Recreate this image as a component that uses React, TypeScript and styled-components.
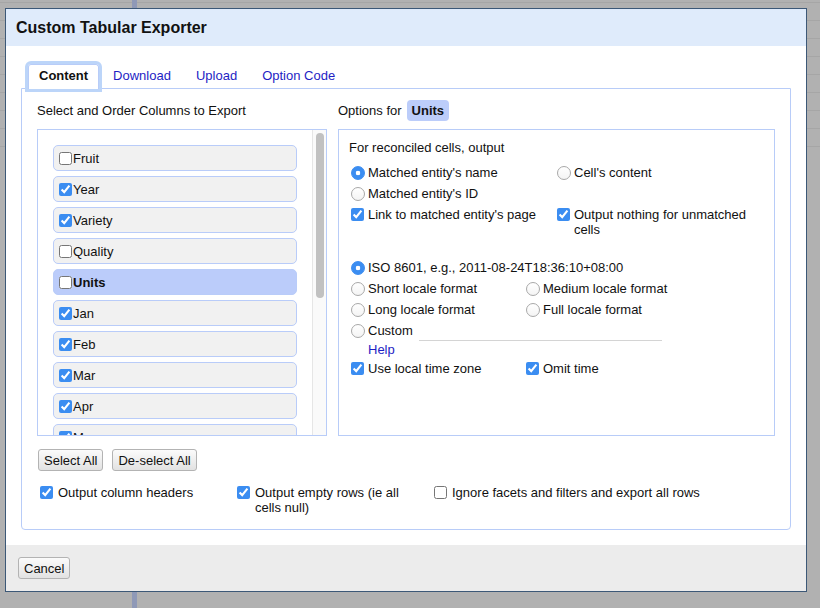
import React from "react";
import styled, { createGlobalStyle } from "styled-components";

const GlobalStyle = createGlobalStyle`
  html, body {
    margin: 0;
    padding: 0;
  }
  body {
    font-family: "Liberation Sans", Arial, Helvetica, sans-serif;
    font-size: 13px;
    color: #111;
    background-color: #b1b1b1;
    background-image:
      linear-gradient(to right, transparent 132px, #8f99b7 132px, #8f99b7 137px, transparent 137px),
      repeating-linear-gradient(to bottom, #a6a6a6 0 1px, transparent 1px 18px);
    background-size: 100% 100%, 100% 150px;
    background-repeat: no-repeat;
    background-position: 0 0, 0 2px;
  }
`;

const Backdrop = styled.div`
  min-height: 100vh;
  box-sizing: border-box;
  padding: 8px 0 0 5px;
`;

const Dialog = styled.div`
  width: 802px;
  box-sizing: border-box;
  border: 1px solid #3c5877;
  background: #fff;
  display: flex;
  flex-direction: column;
`;

const Header = styled.div`
  height: 37px;
  display: flex;
  align-items: center;
  padding: 0 10px;
  background: #dfebfb;
  font-size: 16px;
  font-weight: bold;
  color: #111;
`;

const Body = styled.div`
  padding: 18px 15px 15px;
`;

const TabBar = styled.div`
  display: flex;
  padding-left: 7px;
  position: relative;
  z-index: 1;
`;

const Tab = styled.div<{ $active?: boolean }>`
  height: 25px;
  box-sizing: border-box;
  padding: 3px 10px 0;
  margin: 0 3px -1px 0;
  line-height: 15px;
  border: 1px solid ${p => (p.$active ? "#b8ccf8" : "transparent")};
  border-bottom: none;
  border-radius: 3px 3px 0 0;
  background: ${p => (p.$active ? "#fff" : "transparent")};
  color: ${p => (p.$active ? "#111" : "#1e1ec4")};
  font-weight: ${p => (p.$active ? "bold" : "normal")};
  outline: ${p => (p.$active ? "3px solid #bcd5f9" : "none")};
  outline-offset: 0;
  cursor: pointer;
`;

const Panel = styled.div`
  border: 1px solid #b8ccf8;
  border-radius: 0 0 4px 4px;
  padding: 11px 15px 14px;
  background: #fff;
`;

const Columns = styled.div`
  display: grid;
  grid-template-columns: 290px 1fr;
  column-gap: 11px;
`;

const Heading = styled.div`
  height: 21px;
  display: flex;
  align-items: center;
  gap: 5px;
  margin-bottom: 8px;
`;

const Badge = styled.span`
  background: #bccdfa;
  border-radius: 4px;
  padding: 0 5px;
  line-height: 21px;
  font-weight: bold;
`;

const ListBox = styled.div`
  height: 307px;
  box-sizing: border-box;
  border: 1px solid #b8ccf8;
  display: flex;
`;

const ListItems = styled.div`
  flex: 1;
  overflow: hidden;
  padding: 15px;
  display: flex;
  flex-direction: column;
  gap: 5px;
`;

const ScrollTrack = styled.div`
  width: 14px;
  flex-shrink: 0;
  box-sizing: border-box;
  padding: 3px 2px 0 3px;
  background: #fafafa;
  border-left: 1px solid #e6e6e6;
`;

const ScrollThumb = styled.div`
  height: 165px;
  border-radius: 4px;
  background: #c1c1c1;
`;

const ColumnItem = styled.label<{ $selected?: boolean }>`
  height: 26px;
  flex-shrink: 0;
  box-sizing: border-box;
  display: flex;
  align-items: center;
  padding: 0 5px;
  border: 1px solid #b9ccf9;
  border-radius: 5px;
  background: ${p => (p.$selected ? "#bbccfa" : "#f1f1f1")};
  font-weight: ${p => (p.$selected ? "bold" : "normal")};
`;

const Check = styled.input.attrs({ type: "checkbox" })<{ $ml?: number; $mr?: number }>`
  width: 13px;
  height: 13px;
  flex-shrink: 0;
  margin: ${p => `1px ${p.$mr ?? 4}px 0 ${p.$ml ?? 2}px`};
  accent-color: #3b8df1;
`;

const ListCheck = styled.input.attrs({ type: "checkbox" })`
  width: 13px;
  height: 13px;
  flex-shrink: 0;
  margin: 0 1px 0 0;
  accent-color: #3b8df1;
`;

const Radio = styled.input.attrs({ type: "radio" })`
  appearance: none;
  width: 14px;
  height: 14px;
  flex-shrink: 0;
  box-sizing: border-box;
  margin: 1px 3px 0 2px;
  border: 1px solid #a8a8a8;
  border-radius: 50%;
  background: linear-gradient(#fff, #f4f4f4);

  &:checked {
    border-color: #3b8df1;
    background: radial-gradient(circle, #fff 0 2px, #3b8df1 2.6px);
  }
`;

const ButtonRow = styled.div`
  display: flex;
  gap: 9px;
  margin-top: 13px;
  padding-left: 1px;
`;

const Button = styled.button`
  height: 22px;
  padding: 0 5px;
  font: inherit;
  color: #111;
  border: 1px solid #b3b3b3;
  border-radius: 3px;
  background: linear-gradient(#fbfbfb, #e2e2e2);
`;

const OptionsBox = styled.div`
  height: 307px;
  box-sizing: border-box;
  border: 1px solid #b8ccf8;
  padding: 10px;
`;

const SubHeading = styled.div`
  line-height: 15px;
  margin-bottom: 7px;
`;

const OptionGrid = styled.div<{ $first: number; $gapTop?: number }>`
  display: grid;
  grid-template-columns: ${p => p.$first}px 1fr;
  margin-top: ${p => p.$gapTop ?? 0}px;
`;

const OptionCell = styled.label<{ $span?: boolean; $tight?: boolean }>`
  display: flex;
  align-items: flex-start;
  padding: ${p => (p.$tight ? "3px 0 0" : "3px 0")};
  line-height: 15px;
  grid-column: ${p => (p.$span ? "1 / -1" : "auto")};
`;

const CustomInput = styled.input`
  width: 243px;
  height: 18px;
  box-sizing: border-box;
  margin: 0 0 0 6px;
  border: none;
  border-bottom: 1px solid #d4d4d4;
  outline: none;
  font: inherit;
`;

const HelpLink = styled.a`
  grid-column: 1 / -1;
  padding: 1px 0 1px 19px;
  line-height: 15px;
  color: #1e1ec4;
  text-decoration: none;
`;

const BottomGrid = styled.div`
  display: grid;
  grid-template-columns: 197px 197px 1fr;
  margin-top: 14px;
`;

const BottomCell = styled.label`
  display: flex;
  align-items: flex-start;
  line-height: 15px;
`;

const BottomText = styled.span<{ $max?: number }>`
  max-width: ${p => (p.$max ? `${p.$max}px` : "none")};
`;

const Footer = styled.div`
  height: 46px;
  box-sizing: border-box;
  padding: 12px;
  background: #ececec;
`;

const columns: { name: string; checked: boolean }[] = [
  { name: "Fruit", checked: false },
  { name: "Year", checked: true },
  { name: "Variety", checked: true },
  { name: "Quality", checked: false },
  { name: "Units", checked: false },
  ...["Jan", "Feb", "Mar", "Apr", "May", "Jun", "Jul", "Aug", "Sep", "Oct", "Nov", "Dec"].map(m => ({
    name: m,
    checked: true,
  })),
];

export default function App() {
  return (
    <>
      <GlobalStyle />
      <Backdrop>
        <Dialog>
          <Header>Custom Tabular Exporter</Header>
          <Body>
            <TabBar>
              <Tab $active>Content</Tab>
              <Tab>Download</Tab>
              <Tab>Upload</Tab>
              <Tab>Option Code</Tab>
            </TabBar>
            <Panel>
              <Columns>
                <div>
                  <Heading>Select and Order Columns to Export</Heading>
                  <ListBox>
                    <ListItems>
                      {columns.map(c => (
                        <ColumnItem key={c.name} $selected={c.name === "Units"}>
                          <ListCheck defaultChecked={c.checked} />
                          {c.name}
                        </ColumnItem>
                      ))}
                    </ListItems>
                    <ScrollTrack>
                      <ScrollThumb />
                    </ScrollTrack>
                  </ListBox>
                  <ButtonRow>
                    <Button>Select All</Button>
                    <Button>De-select All</Button>
                  </ButtonRow>
                </div>
                <div>
                  <Heading>
                    Options for <Badge>Units</Badge>
                  </Heading>
                  <OptionsBox>
                    <SubHeading>For reconciled cells, output</SubHeading>
                    <OptionGrid $first={206}>
                      <OptionCell>
                        <Radio name="recon" defaultChecked />
                        Matched entity's name
                      </OptionCell>
                      <OptionCell>
                        <Radio name="recon" />
                        Cell's content
                      </OptionCell>
                      <OptionCell $span>
                        <Radio name="recon" />
                        Matched entity's ID
                      </OptionCell>
                      <OptionCell>
                        <Check defaultChecked />
                        Link to matched entity's page
                      </OptionCell>
                      <OptionCell>
                        <Check defaultChecked />
                        Output nothing for unmatched cells
                      </OptionCell>
                    </OptionGrid>
                    <OptionGrid $first={175} $gapTop={17}>
                      <OptionCell $span>
                        <Radio name="date" defaultChecked />
                        ISO 8601, e.g., 2011-08-24T18:36:10+08:00
                      </OptionCell>
                      <OptionCell>
                        <Radio name="date" />
                        Short locale format
                      </OptionCell>
                      <OptionCell>
                        <Radio name="date" />
                        Medium locale format
                      </OptionCell>
                      <OptionCell>
                        <Radio name="date" />
                        Long locale format
                      </OptionCell>
                      <OptionCell>
                        <Radio name="date" />
                        Full locale format
                      </OptionCell>
                      <OptionCell $span $tight>
                        <Radio name="date" />
                        Custom
                        <CustomInput />
                      </OptionCell>
                      <HelpLink href="#">Help</HelpLink>
                      <OptionCell>
                        <Check defaultChecked />
                        Use local time zone
                      </OptionCell>
                      <OptionCell>
                        <Check defaultChecked />
                        Omit time
                      </OptionCell>
                    </OptionGrid>
                  </OptionsBox>
                </div>
              </Columns>
              <BottomGrid>
                <BottomCell>
                  <Check defaultChecked $ml={3} $mr={5} />
                  <BottomText>Output column headers</BottomText>
                </BottomCell>
                <BottomCell>
                  <Check defaultChecked $ml={3} $mr={5} />
                  <BottomText $max={160}>Output empty rows (ie all cells null)</BottomText>
                </BottomCell>
                <BottomCell>
                  <Check $ml={3} $mr={5} />
                  <BottomText>Ignore facets and filters and export all rows</BottomText>
                </BottomCell>
              </BottomGrid>
            </Panel>
          </Body>
          <Footer>
            <Button>Cancel</Button>
          </Footer>
        </Dialog>
      </Backdrop>
    </>
  );
}
